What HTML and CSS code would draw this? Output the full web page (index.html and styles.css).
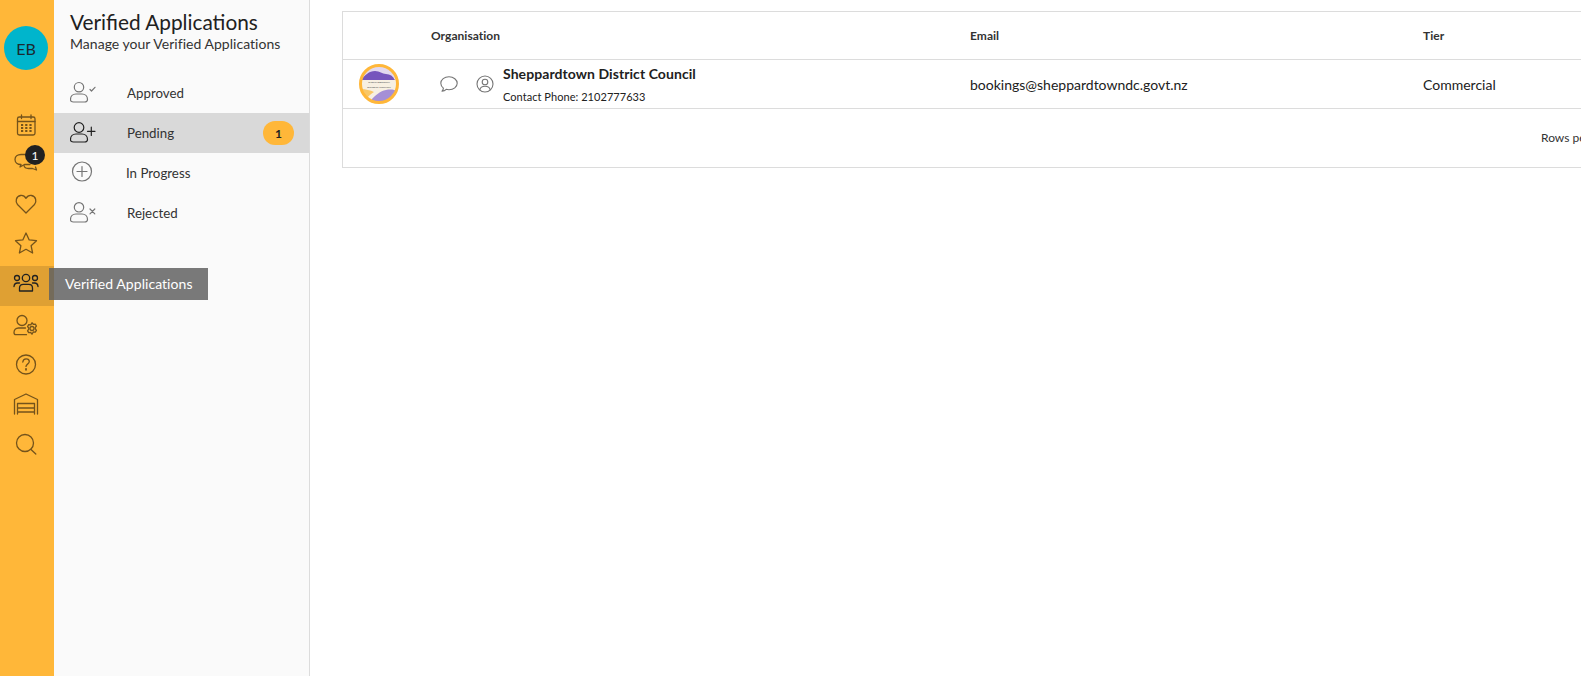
FILE: index.html
```html
<!DOCTYPE html>
<html lang="en">
<head>
<meta charset="utf-8">
<title>Verified Applications</title>
<link rel="stylesheet" href="styles.css">
</head>
<body>
<div class="app">
  <nav class="rail">
    <div class="avatar">EB</div>
    <ul class="rail-list">
      <li class="rail-item">
        <svg class="rail-icon" viewBox="0 0 28 28"><rect x="5.500" y="7" width="17.500" height="18" rx="1.800"/><path d="M5.500 11.500h17.500M9.500 5v3.500M19 5v3.500"/><path class="dots" d="M9 15h2.200M13.200 15h2.200M17.400 15h2.200M9 18h2.200M13.200 18h2.200M17.400 18h2.200M9 21h2.200M13.200 21h2.200M17.400 21h2.200"/></svg>
      </li>
      <li class="rail-item rail-chat">
        <svg class="rail-icon" viewBox="0 0 28 28"><path d="M15 4.500H9c-3.300 0-6 2-6 5s2.700 5 6 5l-1 2.500 4.500-2.500H18"/><path d="M12 15.500c.3 2 2.500 3 4.500 3h4l4 1.500-1-3"/></svg>
        <span class="rail-badge">1</span>
      </li>
      <li class="rail-item">
        <svg class="rail-icon" viewBox="0 0 28 28"><path d="M14 23 5.500 14.500C3 11.700 4 6.300 8.500 5.500c2.300-.4 4.300.8 5.500 2.800 1.200-2 3.200-3.200 5.500-2.800 4.500.8 5.500 6.200 3 9z"/></svg>
      </li>
      <li class="rail-item">
        <svg class="rail-icon" viewBox="0 0 28 28"><path d="m14 3 3.200 6.900 7.300.8-5.400 5 1.500 7.300-6.600-3.700L7.400 23l1.500-7.300-5.400-5 7.300-.8z"/></svg>
      </li>
      <li class="rail-item is-active">
        <svg class="rail-icon" viewBox="0 0 28 28"><circle cx="14" cy="8" r="3.700"/><circle cx="5" cy="8" r="2.500"/><circle cx="23" cy="8" r="2.500"/><path d="M7.500 21v-3c0-2.200 1.500-3.700 3.700-3.700h5.600c2.200 0 3.700 1.500 3.700 3.700v3z"/><path d="M2 16.500c.2-2.300 1.500-3.500 3.500-3.500h2M26 16.500c-.2-2.300-1.500-3.500-3.500-3.500h-2"/></svg>
        <div class="tooltip">Verified Applications</div>
      </li>
      <li class="rail-item">
        <svg class="rail-icon" viewBox="0 0 28 28"><circle cx="10" cy="10.500" r="5"/><path d="M13.500 18H6.500C3.800 18 2 20 2 22.500c0 1.300.8 2.200 2 2.200h10.500"/><circle cx="20" cy="18.500" r="2"/><path d="M20 12.800l1.300 1.500 2-.2 1.100 1.900-1.200 1.600.1 1 1.100 1.700-1.100 1.900-2-.2L20 24.200l-1.300-1.700-2 .2-1.100-1.900 1.100-1.700.1-1-1.200-1.600 1.100-1.900 2 .2z"/></svg>
      </li>
      <li class="rail-item">
        <svg class="rail-icon" viewBox="0 0 28 28"><circle cx="14" cy="14.500" r="9.500"/><path d="M10.800 12c.2-2 1.600-3.200 3.300-3.200 1.800 0 3.200 1.200 3.200 2.800 0 2.500-3.300 2.500-3.300 4.800"/><path d="M14 18.800v1" stroke-width="1.800"/></svg>
      </li>
      <li class="rail-item">
        <svg class="rail-icon" viewBox="0 0 28 28"><path d="M2.500 24V9.500L14 4l11.500 5.500V24"/><path d="M5.500 24V13.500H22.500V24M5.500 18H22.500M5.500 22H22.500"/></svg>
      </li>
      <li class="rail-item">
        <svg class="rail-icon" viewBox="0 0 28 28"><circle cx="13" cy="13" r="8.500"/><path d="m19 19.500 4.800 4.500"/></svg>
      </li>
    </ul>
  </nav>

  <aside class="panel">
    <header class="panel-head">
      <h1 class="panel-title">Verified Applications</h1>
      <p class="panel-sub">Manage your Verified Applications</p>
    </header>
    <ul class="menu">
      <li class="menu-item">
        <svg class="menu-icon" viewBox="0 0 28 24"><circle cx="9" cy="7.200" r="4.700"/><path d="M3.500 22c-2 0-3-.8-3-2.500 0-3.500 2.500-5.500 5.500-5.500h6c3 0 5.500 2 5.500 5.500 0 1.700-1 2.500-3 2.500z"/><path d="m20 9.500 1.500 1.500 3.500-3.700"/></svg>
        <span class="menu-label">Approved</span>
      </li>
      <li class="menu-item is-selected">
        <svg class="menu-icon" viewBox="0 0 28 24"><circle cx="9" cy="7.500" r="4.800"/><path d="M3.500 22c-2 0-3-.8-3-2.500 0-3.500 2.500-5.500 5.500-5.500h6c3 0 5.500 2 5.500 5.500 0 1.700-1 2.500-3 2.500z"/><path d="M21.300 7.200v8.300M17.500 11.300H25"/></svg>
        <span class="menu-label">Pending</span>
        <span class="menu-badge">1</span>
      </li>
      <li class="menu-item">
        <svg class="menu-icon" viewBox="0 0 28 24"><circle cx="12" cy="11.500" r="9.500"/><path d="M12 6.500v10M7 11.500h10"/></svg>
        <span class="menu-label label-tight">In Progress</span>
      </li>
      <li class="menu-item">
        <svg class="menu-icon" viewBox="0 0 28 24"><circle cx="9" cy="7.300" r="4.700"/><path d="M3.500 22c-2 0-3-.8-3-2.500 0-3.500 2.500-5.500 5.500-5.500h6c3 0 5.500 2 5.500 5.500 0 1.700-1 2.500-3 2.500z"/><path d="m20 9 4.800 4.800M24.800 9 20 13.800"/></svg>
        <span class="menu-label">Rejected</span>
      </li>
    </ul>
  </aside>

  <main class="main">
    <div class="table">
      <div class="row row-head">
        <div class="cell cell-lead"></div>
        <div class="cell cell-org">Organisation</div>
        <div class="cell cell-email">Email</div>
        <div class="cell">Tier</div>
      </div>
      <div class="row row-body">
        <div class="cell cell-lead">
          <svg class="org-logo" viewBox="0 0 40 40">
            <defs><clipPath id="logo-clip"><circle cx="20" cy="20" r="18"/></clipPath></defs>
            <circle cx="20" cy="20" r="18" fill="#f7f0e2"/>
            <g clip-path="url(#logo-clip)">
              <path d="M0 0h40v14H0z" fill="#e2d8ef"/>
              <path d="M2 16c4-5 8-9 14-9 5 0 7 3 11 3 4 0 7 2 9 6z" fill="#7655bd"/>
              <path d="M13 35c4-4 8-8 14-9 5-1 9 0 11 1v13H12z" fill="#a58fd6"/>
              <path d="M0 25c5 0 11 1 15 3-3 2-6 4-8 8L0 32z" fill="#f9c766"/>
            </g>
            <text class="logo-text" x="20" y="19" text-anchor="middle">SHEPPARDTOWN</text>
            <text class="logo-text" x="20" y="23.500" text-anchor="middle">DISTRICT COUNCIL</text>
            <circle cx="20" cy="20" r="18.500" fill="none" stroke="#ffb739" stroke-width="3"/>
          </svg>
        </div>
        <div class="cell cell-org org-cell">
          <svg class="row-icon" viewBox="0 0 20 20"><path d="M10 2.800c-4.600 0-8.200 2.800-8.200 6.500 0 1.900 1 3.600 2.600 4.800-.1 1.200-.6 2.300-1.400 3 1.700-.1 3.200-.8 4.200-1.800.9.300 1.800.4 2.800.4 4.600 0 8.200-2.800 8.200-6.400S14.600 2.800 10 2.800z"/></svg>
          <svg class="row-icon" viewBox="0 0 20 20"><circle cx="10" cy="10" r="8"/><circle cx="10" cy="8" r="2.800"/><path d="M4.800 15.800c.5-2.300 2.200-3.500 5.200-3.500s4.700 1.200 5.200 3.500"/></svg>
          <div class="org-text">
            <div class="org-name">Sheppardtown District Council</div>
            <div class="org-phone">Contact Phone: 2102777633</div>
          </div>
        </div>
        <div class="cell cell-email">bookings@sheppardtowndc.govt.nz</div>
        <div class="cell">Commercial</div>
      </div>
      <div class="row-foot">Rows per page:</div>
    </div>
  </main>
</div>
</body>
</html>
```

FILE: styles.css
```css
* { box-sizing: border-box; }

html, body {
  margin: 0;
  height: 100%;
  overflow: hidden;
  background: #fff;
  font-family: Lato, "Liberation Sans", sans-serif;
  color: #212121;
}

ul { list-style: none; margin: 0; padding: 0; }

.app { display: flex; height: 676px; }

/* Icon rail */
.rail {
  flex: 0 0 54px;
  background: #ffb739;
  display: flex;
  flex-direction: column;
  padding-top: 26px;
}

.avatar {
  width: 44px;
  height: 44px;
  margin: 0 0 36px 4px;
  border-radius: 50%;
  background: #00b5cc;
  display: flex;
  align-items: center;
  justify-content: center;
  font-size: 16px;
  color: #1b2a30;
}

.rail-item {
  position: relative;
  height: 40px;
  display: flex;
  padding: 4px 0 0 12px;
}

.rail-icon {
  width: 28px;
  height: 28px;
  fill: none;
  stroke: #74531b;
  stroke-width: 1.300;
  stroke-linecap: round;
  stroke-linejoin: round;
}

.rail-icon .dots { stroke-width: 2; stroke-linecap: butt; }

.rail-badge {
  position: absolute;
  left: 25px;
  top: -1px;
  width: 20px;
  height: 20px;
  border-radius: 50%;
  background: #212121;
  color: #fff;
  font-size: 12px;
  display: flex;
  align-items: center;
  justify-content: center;
}

.is-active { background: #dfa033; }
.is-active .rail-icon { stroke: #212121; }

.tooltip {
  position: absolute;
  left: 49px;
  top: 2px;
  width: 159px;
  height: 32px;
  padding-left: 16px;
  background: rgba(97, 97, 97, 0.85);
  color: #fff;
  font-size: 14px;
  letter-spacing: 0.05px;
  line-height: 32px;
  white-space: nowrap;
}

/* Sub navigation */
.panel {
  flex: 0 0 256px;
  background: #fafafa;
  border-right: 1px solid #dcdcdc;
}

.panel-head { padding: 8px 0 0 16px; height: 73px; }

.panel-title {
  margin: 0;
  font-size: 20.800px;
  font-weight: 400;
  line-height: 27px;
  color: #212121;
}

.panel-sub {
  margin: 0;
  font-size: 14px;
  letter-spacing: 0.03px;
  line-height: 17px;
  color: #333;
}

.menu-item {
  height: 40px;
  display: flex;
  align-items: center;
  padding-left: 16px;
  font-size: 13.300px;
  color: #333;
}

.is-selected { background: #d9d9d9; }

.menu-icon {
  flex: 0 0 28px;
  width: 28px;
  height: 24px;
  margin-top: -3px;
  fill: none;
  stroke: #757575;
  stroke-width: 1.200;
  stroke-linecap: round;
  stroke-linejoin: round;
}

.is-selected .menu-icon { stroke: #212121; }

.menu-label { margin: -1px 0 0 29px; }
.label-tight { margin-left: 28px; }

.menu-badge {
  margin-left: auto;
  margin-right: 15px;
  width: 31px;
  height: 24px;
  border-radius: 12px;
  background: #ffb739;
  color: #212121;
  font-size: 12px;
  font-weight: 700;
  display: flex;
  align-items: center;
  justify-content: center;
}

/* Table */
.main { flex: 1 1 auto; min-width: 0; padding: 11px 0 0 32px; overflow: hidden; }

.table {
  width: 1400px;
  height: 157px;
  border: 1px solid #dcdcdc;
  background: #fff;
}

.row {
  display: flex;
  align-items: center;
  border-bottom: 1px solid #dcdcdc;
}

.row-head { height: 48px; font-size: 12px; font-weight: 700; color: #333; letter-spacing: 0.03px; }
.row-body { height: 49px; font-size: 14px; color: #212121; }

.cell-lead { flex: 0 0 88px; display: flex; padding-left: 16px; }
.cell-org { flex: 0 0 539px; }
.cell-email { flex: 0 0 453px; }

.org-logo { width: 40px; height: 40px; display: block; }
.logo-text { font-size: 2.600px; font-weight: 700; fill: #666; }

.org-cell { display: flex; align-items: center; padding-left: 8px; }

.row-icon {
  flex: 0 0 20px;
  width: 20px;
  height: 20px;
  margin-right: 16px;
  fill: none;
  stroke: #757575;
  stroke-width: 1.100;
  stroke-linecap: round;
  stroke-linejoin: round;
}

.row-icon + .row-icon { margin-right: 8px; }

.org-text { display: flex; flex-direction: column; }
.org-name { font-size: 14px; font-weight: 700; letter-spacing: 0.07px; line-height: 17px; margin-bottom: 8px; }
.org-phone { font-size: 11px; letter-spacing: 0.05px; line-height: 14px; }

.row-foot {
  height: 58px;
  padding: 21px 0 0 1198px;
  font-size: 12px;
  line-height: 15px;
  color: #333;
  white-space: nowrap;
}
```
